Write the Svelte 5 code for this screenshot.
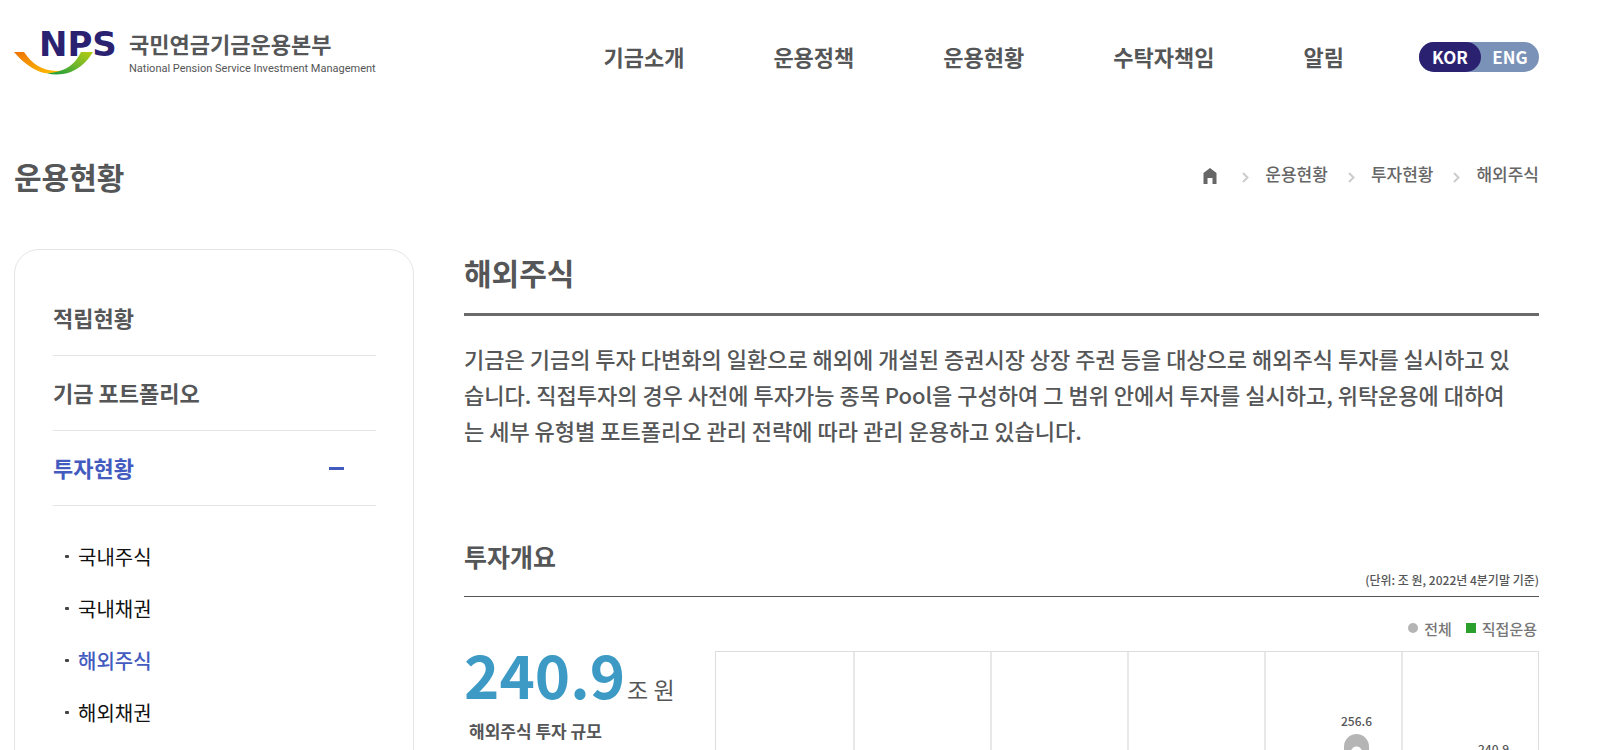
<script lang="ts">
	interface Link {
		label: string;
		href: string;
	}

	interface Column {
		total?: number;
		top?: number;
	}

	const nav: Link[] = [
		{ label: '기금소개', href: '#intro' },
		{ label: '운용정책', href: '#policy' },
		{ label: '운용현황', href: '#status' },
		{ label: '수탁자책임', href: '#stewardship' },
		{ label: '알림', href: '#notice' }
	];

	const crumbs: Link[] = [
		{ label: '운용현황', href: '#status' },
		{ label: '투자현황', href: '#invest' },
		{ label: '해외주식', href: '#foreign-stock' }
	];

	const subMenu: Link[] = [
		{ label: '국내주식', href: '#domestic-stock' },
		{ label: '국내채권', href: '#domestic-bond' },
		{ label: '해외주식', href: '#foreign-stock' },
		{ label: '해외채권', href: '#foreign-bond' }
	];

	// distance from the top of the plot to each label
	const columns: Column[] = [{}, {}, {}, {}, { total: 256.6, top: 59 }, { total: 240.9, top: 87 }];

	let current = $state('#foreign-stock');
	let open = $state(true);
	let lang = $state('KOR');
</script>

<div class="page">
	<header>
		<a class="logo" href="#home">
			<svg width="104" height="46" viewBox="0 0 104 46">
				<defs>
					<linearGradient id="orange" x1="0" y1="0" x2="1" y2="1">
						<stop offset="0" stop-color="#ee7203" />
						<stop offset="1" stop-color="#fdc300" />
					</linearGradient>
					<linearGradient id="green" x1="1" y1="0" x2="0" y2="1">
						<stop offset="0" stop-color="#b5cc10" />
						<stop offset="0.5" stop-color="#6cb52d" />
						<stop offset="1" stop-color="#109b3c" />
					</linearGradient>
				</defs>
				<text x="25" y="26">NPS</text>
				<path d="M0 22h10c8 12 20 21 39 18.500C41 44 31 44.500 23 40.500 12 35 6 29 0 22z" fill="url(#orange)" />
				<path d="M79 22H67C61 34 53 41.500 33 43.500c23 4.500 37-7 46-21.500z" fill="url(#green)" />
			</svg>
			<span class="logo-text">
				<strong>국민연금기금운용본부</strong>
				<small>National Pension Service Investment Management</small>
			</span>
		</a>

		<nav class="gnb">
			{#each nav as item}
				<a href={item.href}>{item.label}</a>
			{/each}
		</nav>

		<div class="lang">
			{#each ['KOR', 'ENG'] as code}
				<button type="button" class:on={lang === code} onclick={() => (lang = code)}>{code}</button>
			{/each}
		</div>
	</header>

	<div class="title-bar">
		<h1>운용현황</h1>
		<nav class="crumbs" aria-label="breadcrumb">
			<a class="home" href="#home" aria-label="홈">
				<svg width="14" height="16" viewBox="0 0 14 16"><path d="M7 0l6.500 5v11H9.500v-6h-5v6H0.500V5z" fill="#666" /></svg>
			</a>
			{#each crumbs as crumb}
				<svg class="arrow" width="7" height="11" viewBox="0 0 7 11"><path d="M1 1l4.500 4.500L1 10" fill="none" stroke="#ccc" stroke-width="2" /></svg>
				<a href={crumb.href}>{crumb.label}</a>
			{/each}
		</nav>
	</div>

	<div class="body">
		<aside>
			<a class="menu" href="#reserve">적립현황</a>
			<a class="menu" href="#portfolio">기금 포트폴리오</a>
			<button type="button" class="menu active" aria-expanded={open} onclick={() => (open = !open)}>
				투자현황
				<span class="sign" class:plus={!open}></span>
			</button>
			{#if open}
				<ul>
					{#each subMenu as item}
						<li><a href={item.href} class:current={current === item.href} onclick={() => (current = item.href)}>{item.label}</a></li>
					{/each}
				</ul>
			{/if}
		</aside>

		<main>
			<h2>해외주식</h2>
			<p class="intro">
				기금은 기금의 투자 다변화의 일환으로 해외에 개설된 증권시장 상장 주권 등을 대상으로 해외주식 투자를 실시하고 있습니다. 직접투자의 경우 사전에 투자가능 종목 Pool을 구성하여 그 범위 안에서 투자를 실시하고, 위탁운용에 대하여는 세부 유형별 포트폴리오 관리 전략에 따라 관리 운용하고 있습니다.
			</p>

			<div class="section-head">
				<h3>투자개요</h3>
				<span>(단위: 조 원, 2022년 4분기말 기준)</span>
			</div>

			<div class="overview">
				<div class="summary">
					<p class="amount"><strong>240.9</strong><span>조 원</span></p>
					<p class="caption">해외주식 투자 규모</p>
				</div>
				<div class="chart">
					<div class="legend">
						<span><i class="dot"></i>전체</span>
						<span><i class="square"></i>직접운용</span>
					</div>
					<div class="plot">
						{#each columns as column}
							<div class="column">
								{#if column.total}
									<div class="bar" style:margin-top="{column.top}px">
										<span>{column.total}</span>
										<i></i>
									</div>
								{/if}
							</div>
						{/each}
					</div>
				</div>
			</div>
		</main>
	</div>
</div>

<style>
	:global(body) {
		margin: 0;
		background: #fff;
	}

	.page {
		box-sizing: border-box;
		height: 100vh;
		overflow: hidden;
		padding: 0 73px 0 14px;
		font-family: 'Noto Sans CJK KR', 'Noto Sans', sans-serif;
		font-weight: 500;
		color: #555657;
	}

	h1, h2, h3, p, ul {
		margin: 0;
		padding: 0;
	}

	a {
		color: inherit;
		text-decoration: none;
	}

	button {
		padding: 0;
		border: 0;
		background: none;
		font: inherit;
		color: inherit;
		cursor: pointer;
	}

	header {
		display: flex;
		align-items: center;
		height: 114px;
	}

	.logo {
		display: flex;
		align-items: center;
		gap: 11px;
		margin: 0 auto 8px 0;
	}

	.logo svg {
		overflow: visible;
	}

	.logo text {
		font-family: 'DejaVu Sans', sans-serif;
		font-size: 34px;
		font-weight: 700;
		fill: #2b2171;
	}

	.logo-text {
		display: flex;
		flex-direction: column;
		gap: 6px;
	}

	.logo-text strong {
		font-size: 22px;
		line-height: 26px;
	}

	.logo-text small {
		font-family: Roboto, 'Liberation Sans', sans-serif;
		font-weight: 400;
		font-size: 11px;
		line-height: 14px;
	}

	.gnb {
		display: flex;
		gap: 89px;
		margin: 0 75px 2px 0;
		font-size: 22px;
		font-weight: 700;
		line-height: 32px;
	}

	.lang {
		display: flex;
		height: 30px;
		border-radius: 15px;
		background: #7b92b8;
		font-size: 17px;
		font-weight: 700;
		line-height: 30px;
		color: #fff;
	}

	.lang button {
		width: 58px;
		border-radius: 15px;
	}

	.lang .on {
		width: 62px;
		background: #2b2171;
	}

	.title-bar {
		display: flex;
		align-items: center;
		justify-content: space-between;
		height: 135px;
		padding-bottom: 12px;
		box-sizing: border-box;
	}

	h1, h2 {
		font-size: 30px;
		font-weight: 700;
		line-height: 44px;
	}

	.crumbs {
		display: flex;
		align-items: center;
		margin-bottom: 4px;
		font-size: 17px;
		line-height: 26px;
		color: #666;
	}

	.home {
		display: flex;
		margin: 4px 5px 0 0;
	}

	.arrow {
		margin: 8px 16px 0 20px;
	}

	.body {
		display: flex;
		align-items: flex-start;
		gap: 50px;
	}

	aside {
		box-sizing: border-box;
		flex: 0 0 400px;
		min-height: 640px;
		padding: 31px 37px 30px 38px;
		border: 1px solid #e5e5e5;
		border-radius: 25px;
	}

	.menu {
		display: flex;
		align-items: center;
		justify-content: space-between;
		box-sizing: border-box;
		width: 100%;
		height: 75px;
		padding-bottom: 3px;
		border-bottom: 1px solid #e5e5e5;
		font-size: 22px;
		font-weight: 700;
	}

	.active {
		color: #435bbf;
	}

	.sign {
		position: relative;
		width: 15px;
		height: 3px;
		margin: 3px 32px 0 0;
		background: #435bbf;
	}

	.sign.plus::after {
		content: '';
		position: absolute;
		inset: 0;
		background: inherit;
		transform: rotate(90deg);
	}

	ul {
		padding: 24px 0 0 12px;
		list-style: none;
	}

	li {
		display: flex;
		align-items: center;
		gap: 9px;
		height: 52px;
		font-size: 20px;
		font-weight: 400;
		color: #111;
	}

	li::before {
		content: '';
		width: 4px;
		height: 3px;
		border-radius: 1px;
		background: #444;
	}

	.current {
		font-weight: 500;
		color: #435bbf;
	}

	main {
		flex: 1;
		min-width: 0;
	}

	h2 {
		padding: 1px 0 19px;
		border-bottom: 3px solid #6a6a6b;
	}

	.intro {
		padding: 24px 20px 90px 0;
		font-size: 22px;
		line-height: 36px;
		word-break: break-all;
	}

	.section-head {
		display: flex;
		align-items: flex-end;
		justify-content: space-between;
		padding-bottom: 6px;
		border-bottom: 1px solid #555;
	}

	h3 {
		padding-bottom: 16px;
		font-size: 25px;
		font-weight: 700;
		line-height: 36px;
	}

	.section-head span {
		font-size: 12px;
		line-height: 20px;
	}

	.overview {
		display: flex;
	}

	.summary {
		flex: 0 0 251px;
		padding-top: 44px;
	}

	.amount {
		display: flex;
		align-items: baseline;
		gap: 2px;
		line-height: 64px;
	}

	.amount strong {
		font-size: 60px;
		font-weight: 700;
		color: #3c9ac5;
	}

	.amount span {
		font-size: 23px;
		font-weight: 400;
	}

	.caption {
		padding-left: 5px;
		font-size: 17px;
		font-weight: 700;
		line-height: 20px;
	}

	.chart {
		flex: 1;
	}

	.legend {
		display: flex;
		justify-content: flex-end;
		gap: 14px;
		padding: 19px 2px 9px 0;
		font-size: 15px;
		line-height: 26px;
		color: #777;
	}

	.legend span {
		display: flex;
		align-items: center;
		gap: 6px;
	}

	.legend i {
		width: 10px;
		height: 10px;
		margin-bottom: 3px;
	}

	.dot {
		border-radius: 50%;
		background: #b5b5b5;
	}

	.square {
		background: #2ca02c;
	}

	.plot {
		display: grid;
		grid-template-columns: repeat(6, 1fr);
		height: 300px;
		border: 1px solid #ddd;
	}

	.column + .column {
		border-left: 2px solid #e8e8e8;
	}

	.bar {
		display: flex;
		flex-direction: column;
		align-items: center;
		gap: 3px;
		padding-left: 46px;
		font-size: 12px;
		line-height: 20px;
	}

	.bar i {
		width: 25px;
		height: 200px;
		border-radius: 13px;
		background: radial-gradient(circle at 50% 18px, #fff 5px, #b5b5b5 6px);
	}
</style>
